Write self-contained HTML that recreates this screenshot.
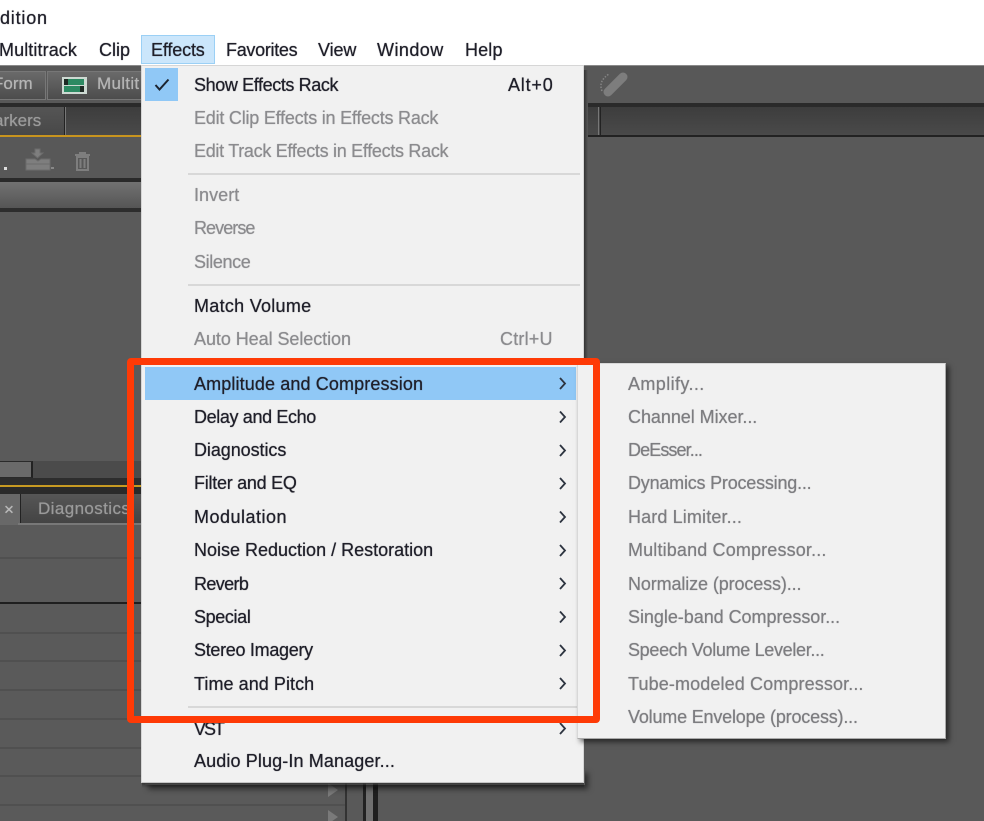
<!DOCTYPE html>
<html lang="en"><head><meta charset="utf-8"><title>Effects menu</title>
<style>
html,body{margin:0;padding:0;background:#fff}
#p{position:relative;width:984px;height:821px;overflow:hidden;background:#fff;font-family:"Liberation Sans",sans-serif;font-size:18px;line-height:22px;color:#1f1f29}
#p div{position:absolute}
.t{white-space:nowrap;text-shadow:0 0 .7px currentColor}
.d{color:#8b8b8e}
.g{color:#7d7d80}
svg{position:absolute;overflow:visible}
</style></head><body><div id="p">

<!-- app dark body -->
<div style="left:0;top:65px;width:984px;height:756px;background:#595959"></div>
<div style="left:0;top:65px;width:984px;height:1px;background:#8a8a8a"></div>
<div style="left:0;top:66px;width:984px;height:37px;background:#585858"></div>
<div style="left:0;top:103px;width:984px;height:4px;background:#2a2a2a"></div>
<div style="left:0;top:107px;width:984px;height:29px;background:linear-gradient(#3d3d3d,#4a4a4a)"></div>
<div style="left:0;top:135px;width:142px;height:2px;background:#c8941e"></div>
<div style="left:584px;top:135px;width:400px;height:2px;background:#222"></div>
<div style="left:0;top:137px;width:142px;height:42px;background:#585858"></div>
<div style="left:0;top:178px;width:142px;height:4px;background:#2a2a2a"></div>
<div style="left:0;top:182px;width:142px;height:26px;background:linear-gradient(#727272,#555)"></div>
<div style="left:0;top:208px;width:142px;height:4px;background:#2d2d2d"></div>
<div style="left:0;top:212px;width:142px;height:249px;background:#5a5a5a"></div>

<!-- toolbar buttons -->
<div style="left:0;top:71px;width:45px;height:27px;background:linear-gradient(#6a6a6a,#4c4c4c);border:1px solid #777;border-left:0"></div>
<div style="left:47px;top:71px;width:96px;height:27px;background:linear-gradient(#6a6a6a,#4c4c4c);border:1px solid #777;border-right:0"></div>
<div class="t" style="left:-7px;top:73px;color:#b5b5b5;font-size:17px">Form</div>
<div style="left:62px;top:77px;width:25px;height:17px;background:#cdd9d2"></div>
<div style="left:64px;top:79px;width:20px;height:6px;background:#2c8a62"></div>
<div style="left:64px;top:86px;width:20px;height:6px;background:#2c8a62"></div>
<div style="left:64px;top:79px;width:4px;height:6px;background:#1e2a24"></div>
<div style="left:80px;top:86px;width:4px;height:6px;background:#1e2a24"></div>
<div class="t" style="left:97px;top:73px;color:#b5b5b5;font-size:17px;letter-spacing:.3px">Multit</div>

<!-- tab row -->
<div style="left:0;top:107px;width:64px;height:28px;background:linear-gradient(#555,#484848);border-right:1px solid #222"></div>
<div style="left:65px;top:107px;width:1px;height:28px;background:#777"></div>
<div class="t" style="left:-6px;top:110px;color:#9c9c9c;font-size:17px">arkers</div>
<div style="left:598px;top:107px;width:1px;height:28px;background:#777"></div>
<div style="left:600px;top:107px;width:1px;height:28px;background:#222"></div>

<!-- small toolbar icons -->
<div style="left:4px;top:167px;width:3px;height:3px;background:#ddd"></div>
<div style="left:51px;top:167px;width:3px;height:2px;background:#888"></div>
<svg style="left:25px;top:147px" width="30" height="26" viewBox="0 0 30 26"><path d="M10 2h5v4h3l-5.500 5-5.500-5h3zM1 12h9l3 2 3-2h9v11H1zM1 17h24" fill="#7e7e7e" stroke="#6c6c6c"/></svg>
<svg style="left:73px;top:151px" width="19" height="20" viewBox="0 0 19 20"><path d="M2 4h15M7 4V2h5v2M4 6v13h11V6zM7.500 8v9M11.500 8v9" fill="none" stroke="#7e7e7e" stroke-width="2"/></svg>
<svg style="left:598px;top:71px" width="32" height="28" viewBox="0 0 32 28"><path d="M10 21 25 6" stroke="#7d7d7d" stroke-width="9" stroke-linecap="round"/><path d="M4 20Q0 10 11 3" fill="none" stroke="#858585" stroke-width="1.500" stroke-dasharray="1.500 1.500"/></svg>

<!-- mid splitter left -->
<div style="left:0;top:461px;width:142px;height:18px;background:#4b4b4b"></div>
<div style="left:0;top:461px;width:33px;height:17px;background:#6a6a6a;border-right:2px solid #222;border-top:1px solid #2a2a2a;border-bottom:1px solid #2a2a2a;box-sizing:border-box"></div>
<div style="left:0;top:478px;width:142px;height:7px;background:#2d2d2d"></div>
<div style="left:0;top:485px;width:142px;height:2px;background:#c79a22"></div>
<div style="left:0;top:487px;width:142px;height:7px;background:#2a2a2a"></div>
<div style="left:0;top:494px;width:20px;height:31px;background:#686868"></div>
<div style="left:20px;top:494px;width:122px;height:29px;background:linear-gradient(#565656,#444);border-left:1px solid #222"></div>
<div style="left:18px;top:523px;width:124px;height:2px;background:#787878"></div>
<div class="t" style="left:4px;top:499px;color:#bbb;font-size:17px">×</div>
<div class="t" style="left:38px;top:498px;color:#9a9a9a;font-size:17px;letter-spacing:.4px">Diagnostics</div>

<!-- rows left -->
<div style="left:0;top:525px;width:142px;height:296px;background:#5a5a5a"></div>
<div style="left:0;top:557px;width:142px;height:2px;background:#505050"></div>
<div style="left:0;top:602px;width:142px;height:2px;background:#1f1f1f"></div>
<div style="left:0;top:632px;width:142px;height:2px;background:#505050"></div>
<div style="left:0;top:660px;width:142px;height:2px;background:#505050"></div>
<div style="left:0;top:689px;width:142px;height:2px;background:#505050"></div>
<div style="left:0;top:718px;width:142px;height:2px;background:#505050"></div>
<div style="left:0;top:747px;width:142px;height:2px;background:#505050"></div>
<div style="left:0;top:775px;width:142px;height:2px;background:#505050"></div>
<div style="left:0;top:804px;width:142px;height:2px;background:#505050"></div>

<!-- bottom strip under menu -->
<div style="left:142px;top:782px;width:200px;height:39px;background:#5a5a5a"></div>
<div style="left:142px;top:804px;width:204px;height:2px;background:#505050"></div>
<div style="left:345px;top:782px;width:2px;height:39px;background:#333"></div>
<div style="left:363px;top:782px;width:3px;height:39px;background:#222"></div>
<div style="left:366px;top:782px;width:7px;height:39px;background:#707070"></div>
<div style="left:373px;top:782px;width:5px;height:39px;background:#1f1f1f"></div>
<svg style="left:328px;top:783px" width="10" height="38" viewBox="0 0 10 38"><path d="M0 0 10 7 0 14zM0 27 10 34 0 41z" fill="#7a7a7a"/></svg>
<div style="left:142px;top:783px;width:442px;height:5px;background:linear-gradient(#3a3a3a,rgba(90,90,90,0))"></div>

<!-- main menu -->
<div style="left:145px;top:769px;width:440px;height:16px;box-shadow:3px 4px 6px rgba(0,0,0,.55)"></div>
<div style="left:584px;top:70px;width:4px;height:292px;background:linear-gradient(90deg,#333,#595959)"></div>
<div style="left:141px;top:65px;width:443px;height:718px;background:#f1f1f1;border:1px solid #d6d6d6;border-bottom:1px solid #c5c5c5;box-sizing:border-box"></div>

<!-- title and menu bar -->
<div class="t" style="left:0;top:7px;letter-spacing:.8px">dition</div>
<div style="left:141px;top:35px;width:74px;height:29px;background:#cbe6fb;border:1px solid #9bd0f5;box-sizing:border-box"></div>
<div class="t" style="left:-1px;top:39px;letter-spacing:.1px">Multitrack</div>
<div class="t" style="left:99px;top:39px">Clip</div>
<div class="t" style="left:151px;top:39px;letter-spacing:-.15px">Effects</div>
<div class="t" style="left:226px;top:39px;letter-spacing:-.3px">Favorites</div>
<div class="t" style="left:318px;top:39px;letter-spacing:-.1px">View</div>
<div class="t" style="left:377px;top:39px;letter-spacing:.45px">Window</div>
<div class="t" style="left:465px;top:39px;letter-spacing:.15px">Help</div>

<!-- check -->
<div style="left:145px;top:68px;width:33px;height:33px;background:#90c8f6"></div>
<svg style="left:154px;top:78px" width="16" height="14" viewBox="0 0 16 14"><path d="M1.500 7 5.500 11.500 14.500 1.500" fill="none" stroke="#1c2430" stroke-width="2"/></svg>

<!-- menu items -->
<div class="t" style="left:194px;top:74px;letter-spacing:-.39px">Show Effects Rack</div>
<div class="t" style="left:508px;top:74px;letter-spacing:.8px">Alt+0</div>
<div class="t d" style="left:194px;top:107px;letter-spacing:-.22px">Edit Clip Effects in Effects Rack</div>
<div class="t d" style="left:194px;top:140px;letter-spacing:-.3px">Edit Track Effects in Effects Rack</div>
<div style="left:188px;top:173px;width:392px;height:2px;background:#d8d8d8"></div>
<div class="t d" style="left:194px;top:184px;letter-spacing:.05px">Invert</div>
<div class="t d" style="left:194px;top:217px;letter-spacing:-.94px">Reverse</div>
<div class="t d" style="left:194px;top:251px;letter-spacing:-.37px">Silence</div>
<div style="left:188px;top:284px;width:392px;height:2px;background:#d8d8d8"></div>
<div class="t" style="left:194px;top:295px;letter-spacing:.28px">Match Volume</div>
<div class="t d" style="left:194px;top:328px;letter-spacing:-.06px">Auto Heal Selection</div>
<div class="t d" style="left:500px;top:328px;letter-spacing:.2px">Ctrl+U</div>

<div style="left:145px;top:367px;width:431px;height:33px;background:#90c8f6"></div>
<div class="t" style="left:194px;top:373px;letter-spacing:.12px">Amplitude and Compression</div>
<div class="t" style="left:194px;top:406px;letter-spacing:-.37px">Delay and Echo</div>
<div class="t" style="left:194px;top:439px;letter-spacing:-.07px">Diagnostics</div>
<div class="t" style="left:194px;top:472px;letter-spacing:-.26px">Filter and EQ</div>
<div class="t" style="left:194px;top:506px;letter-spacing:.5px">Modulation</div>
<div class="t" style="left:194px;top:539px;letter-spacing:0">Noise Reduction / Restoration</div>
<div class="t" style="left:194px;top:573px;letter-spacing:-.63px">Reverb</div>
<div class="t" style="left:194px;top:606px;letter-spacing:-.37px">Special</div>
<div class="t" style="left:194px;top:639px;letter-spacing:-.3px">Stereo Imagery</div>
<div class="t" style="left:194px;top:673px;letter-spacing:.06px">Time and Pitch</div>
<div style="left:188px;top:706px;width:392px;height:2px;background:#d8d8d8"></div>
<div class="t" style="left:194px;top:718px;letter-spacing:-2px">VST</div>
<div class="t" style="left:194px;top:750px;letter-spacing:.12px">Audio Plug-In Manager...</div>

<!-- arrows -->
<svg style="left:559px;top:378px" width="8" height="330" viewBox="0 0 8 330" fill="none" stroke="#2d3440" stroke-width="1.800">
<path d="M1 0 6 5.500 1 11M1 33.500 6 39 1 44.500M1 67 6 72.500 1 78M1 100 6 105.500 1 111M1 133.500 6 139 1 144.500M1 167 6 172.500 1 178M1 200 6 205.500 1 211M1 233.500 6 239 1 244.500M1 267 6 272.500 1 278M1 300 6 305.500 1 311"/></svg>
<svg style="left:559px;top:723px" width="8" height="12" viewBox="0 0 8 12" fill="none" stroke="#2d3440" stroke-width="1.800"><path d="M1 0 6 5.500 1 11"/></svg>

<!-- submenu -->
<div style="left:577px;top:363px;width:369px;height:376px;background:#f1f1f1;border:1px solid #d8d8d8;border-bottom:1px solid #aaa;border-right:1px solid #aaa;box-sizing:border-box;box-shadow:3px 3px 5px rgba(0,0,0,.55)"></div>
<div class="t g" style="left:628px;top:373px;letter-spacing:.4px">Amplify...</div>
<div class="t g" style="left:628px;top:406px;letter-spacing:-.05px">Channel Mixer...</div>
<div class="t g" style="left:628px;top:439px;letter-spacing:-.9px">DeEsser...</div>
<div class="t g" style="left:628px;top:472px;letter-spacing:-.21px">Dynamics Processing...</div>
<div class="t g" style="left:628px;top:506px;letter-spacing:.13px">Hard Limiter...</div>
<div class="t g" style="left:628px;top:539px;letter-spacing:.15px">Multiband Compressor...</div>
<div class="t g" style="left:628px;top:573px;letter-spacing:-.12px">Normalize (process)...</div>
<div class="t g" style="left:628px;top:606px;letter-spacing:-.04px">Single-band Compressor...</div>
<div class="t g" style="left:628px;top:639px;letter-spacing:-.32px">Speech Volume Leveler...</div>
<div class="t g" style="left:628px;top:673px;letter-spacing:.12px">Tube-modeled Compressor...</div>
<div class="t g" style="left:628px;top:706px;letter-spacing:-.19px">Volume Envelope (process)...</div>

<!-- red highlight -->
<div style="left:127px;top:358px;width:473px;height:365px;border:7px solid #fe3a06;border-radius:4px;box-sizing:border-box"></div>

</div></body></html>
